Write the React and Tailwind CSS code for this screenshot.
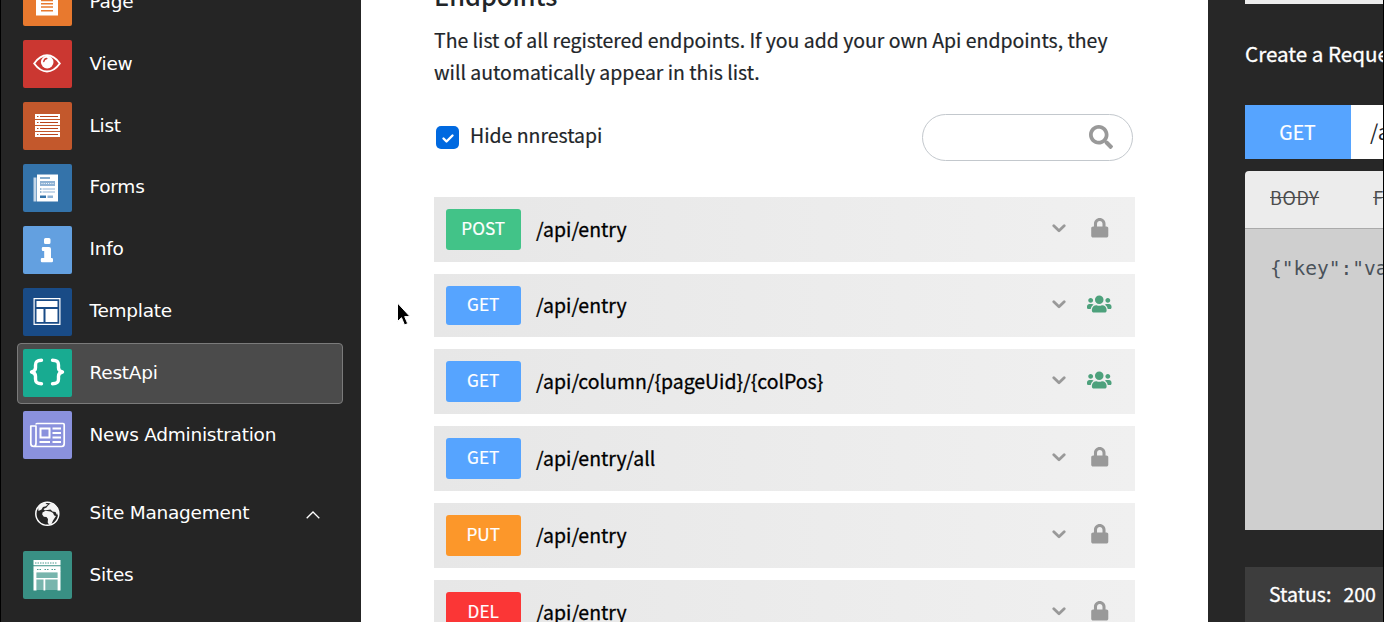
import React from 'react';
import { FaLock, FaUsers, FaSearch } from 'react-icons/fa';

const svgProps = { viewBox: '0 0 48 48', className: 'w-12 h-12 block' };

const icons = {
  page: (
    <svg {...svgProps}>
      <path fill="#fff" d="M13 8h18.500l3.500 4v25.500H13z" />
      <path stroke="#e8792e" strokeWidth="1.500" d="M18 22.500h12M18 25.800h12M18 29.100h12M18 32.700h12" />
    </svg>
  ),
  view: (
    <svg {...svgProps}>
      <path fill="none" stroke="#fff" strokeWidth="1.900" d="M11.200 23.500Q17 15.300 24 15.300T36.800 23.500Q31 31.500 24 31.500T11.200 23.500Z" />
      <circle cx="24.200" cy="22.100" r="6.300" fill="#fff" />
      <path fill="none" stroke="#cb3731" strokeWidth="1.400" strokeLinecap="round" d="M20.800 21.500Q21.200 18.800 23.800 18.500" />
    </svg>
  ),
  list: (
    <svg {...svgProps}>
      <path fill="#fff" d="M12 12h25v5H12zM12 18h25v5H12zM12 24h25v5H12zM12 30h25v5H12z" />
      <path stroke="#b8431c" strokeWidth="1.2" d="M14 14.5h1.500M17 14.5h18M14 20.5h1.500M17 20.5h18M14 26.5h1.500M17 26.5h18M14 32.5h1.500M17 32.5h18" />
    </svg>
  ),
  forms: (
    <svg {...svgProps}>
      <path fill="#c3d6e8" d="M10.500 13.500h3V37.500h-3z" />
      <path fill="#fff" d="M14 10.500h21v27H14z" />
      <path fill="#8fb2d4" d="M17 17h15v5H17z" />
      <path stroke="#3473aa" strokeWidth="1.2" d="M17 14h10" />
      <path stroke="#fff" strokeWidth="1" strokeDasharray="1 1.200" d="M18.500 19.500h12" />
      <path stroke="#3473aa" strokeWidth="1.200" d="M17 25h1.500M17 28h1.500" />
      <path stroke="#8fb2d4" strokeWidth="1.2" d="M19.500 25h12.500M19.500 28h12.500" />
      <path fill="#3473aa" d="M17 31.500h6v2.500h-6z" />
      <path fill="#8fb2d4" d="M24.500 31.500h5.500v2.500h-5.500z" />
    </svg>
  ),
  info: (
    <svg {...svgProps}>
      <path fill="#fff" d="M22.500 12h3.500a1.500 1.500 0 0 1 1.500 1.500v3a1.500 1.500 0 0 1-1.500 1.500h-3.500a1.500 1.500 0 0 1-1.500-1.500v-3a1.500 1.500 0 0 1 1.500-1.500zM20 21h6a2 2 0 0 1 2 2v9h.8a1.200 1.200 0 0 1 1.200 1.200V35a1.200 1.200 0 0 1-1.200 1.200H19A1.200 1.200 0 0 1 17.800 35v-1.800A1.200 1.200 0 0 1 19 32h2.200v-7H20a1.200 1.200 0 0 1-1.200-1.200v-1.600A1.200 1.200 0 0 1 20 21z" />
    </svg>
  ),
  template: (
    <svg {...svgProps}>
      <path fill="none" stroke="#fff" strokeWidth="1.2" d="M11.100 10.600h25.800v25.800H11.100z" />
      <path fill="#fff" d="M13.500 13h21v6h-21zM13.500 21h7v13h-7zM22.500 21h12v13h-12z" />
    </svg>
  ),
  rest: (
    <svg {...svgProps}>
      <path fill="none" stroke="#fff" strokeWidth="3.400" strokeLinecap="round" strokeLinejoin="round" d="M18.500 11.300c-4.500 0-6 1.500-6 4.700v2.800c0 2.500-1.500 3.700-4 4.200 2.500.5 4 1.700 4 4.200v2.800c0 3.200 1.500 4.700 6 4.700M29.500 11.300c4.500 0 6 1.500 6 4.700v2.800c0 2.500 1.500 3.700 4 4.200-2.500.5-4 1.700-4 4.200v2.800c0 3.200-1.500 4.700-6 4.700" />
    </svg>
  ),
  news: (
    <svg {...svgProps}>
      <path fill="none" stroke="#fff" strokeWidth="1.700" strokeLinejoin="round" d="M13 13.500q0-1 1-1h26q1.200 0 1.200 1.200v18.800q0 3-2.500 3H11q-3.200 0-3.200-3V15H13V32q0 3.500-2.500 3.500" />
      <path fill="none" stroke="#fff" strokeWidth="2" d="M17.500 17.500h9v9h-9z" />
      <path stroke="#fff" strokeWidth="1.800" d="M29.500 17.500H38M29.500 22H38M29.500 26.500H38M16.500 31h10.500M29.500 31H38" />
    </svg>
  ),
  sites: (
    <svg {...svgProps}>
      <path fill="#fff" d="M10.500 9h27v5.300h-27zM10.500 15.300h27v5h-27z" />
      <path stroke="#399084" strokeWidth=".9" strokeDasharray="1.500 1" d="M12 12h22M14 18.500h5M21.500 18.500h5M28.500 18.500h4" />
      <path fill="#78b5ad" d="M13.500 21.500h21v17.500h-21z" />
      <path fill="#fff" d="M10.500 20h3v19.500h-3zM34.500 20h3v19.500h-3zM13 20h22v1.500H13zM13 27h22v1.500H13zM20.500 28h1.800v11.500h-1.800z" />
    </svg>
  ),
};

const modules = [
  { label: 'Page', icon: 'page', color: 'bg-[#e8792e]' },
  { label: 'View', icon: 'view', color: 'bg-[#cb3731]' },
  { label: 'List', icon: 'list', color: 'bg-[#c3582c]' },
  { label: 'Forms', icon: 'forms', color: 'bg-[#3473aa]' },
  { label: 'Info', icon: 'info', color: 'bg-[#63a0e0]' },
  { label: 'Template', icon: 'template', color: 'bg-[#194b86]' },
  { label: 'RestApi', icon: 'rest', color: 'bg-[#18ab91]', active: true },
  { label: 'News Administration', icon: 'news', color: 'bg-[#8a91dd]' },
];

function Module({ label, icon, color, active }) {
  return (
    <li className="h-[61.850px] shrink-0">
      <div
        className={
          'h-[60.500px] flex items-center gap-[18px] pl-[5px] rounded-[4px] border ' +
          (active ? 'bg-[#4b4b4b] border-[#7b7b7b]' : 'border-transparent')
        }
      >
        <span className={'w-[48.500px] h-[48px] shrink-0 rounded-[2px] ' + color}>{icons[icon]}</span>
        <span className="pb-px">{label}</span>
      </div>
    </li>
  );
}

function Sidebar() {
  return (
    <nav className="w-[361px] shrink-0 bg-[#252525] border-l border-black pl-[16px] pr-[18px] overflow-hidden text-white text-[18.500px] leading-6 tracking-[-0.240px] font-['DejaVu_Sans',sans-serif]">
      <ul className="flex flex-col -mt-[27.900px]">
        {modules.map((m) => (
          <Module key={m.label} {...m} />
        ))}
        <li className="h-[78px] shrink-0 flex items-center pt-[16px] pl-[6px] pr-[23.500px]">
          <svg viewBox="0 0 48 48" className="w-12 h-12 shrink-0">
            <circle cx="24.300" cy="23.800" r="11.500" fill="none" stroke="#fff" strokeWidth="1.500" />
            <path
              fill="#f4f4f4"
              d="M15 16.500Q18 12.500 24 12l-1.500 2 2.500.3-2 2-3 .7-1.500 2.500-3 1.500zM20.500 19l3-1.500 1.500-2 3-2.500 3 .8Q35 17 35.500 21.500l-1.200 4-1.800-3.500-3-.5-2-2-3 .5-3 .3zM19.500 22.500l3-1.800 5 .8 2.500 1.500 1.200 2.500 1.800.5-3 4.500-1.500 3.500-2.300 1-1.500-2.500.3-3.500-1.500-2-2.700-.3-1.600-2.200z"
            />
          </svg>
          <span className="ml-[18.500px] pb-px">Site Management</span>
          <svg viewBox="0 0 14 8" className="ml-auto w-[14px] h-[8px] mt-0.5" fill="none" stroke="#fff" strokeWidth="1.300">
            <path d="M.7 7.300L7 1l6.300 6.300" />
          </svg>
        </li>
        <Module label="Sites" icon="sites" color="bg-[#399084]" />
      </ul>
    </nav>
  );
}

const endpoints = [
  { method: 'POST', path: '/api/entry', color: 'bg-[#42c388]', lock: true },
  { method: 'GET', path: '/api/entry', color: 'bg-[#56a4ff]', h: 'h-[63px]' },
  { method: 'GET', path: '/api/column/{pageUid}/{colPos}', color: 'bg-[#56a4ff]' },
  { method: 'GET', path: '/api/entry/all', color: 'bg-[#56a4ff]', lock: true },
  { method: 'PUT', path: '/api/entry', color: 'bg-[#fc972a]', lock: true },
  { method: 'DEL', path: '/api/entry', color: 'bg-[#fb3636]', lock: true },
];

function Endpoint({ method, path, color, lock, h }) {
  return (
    <li className={'shrink-0 flex items-stretch py-3 pl-[11.500px] pr-[21.500px] bg-gradient-to-r from-[#e7e7e7] to-[#f0f0f0] ' + (h || 'h-[65px]')}>
      <span className={'w-[75.500px] rounded-[3px] flex items-center justify-center text-white text-[17.200px] leading-none pb-[3px] [-webkit-text-stroke:0.2px] ' + color}>
        {method}
      </span>
      <span className="ml-[15px] self-center text-black text-[19.450px] leading-6 pb-[2px] [-webkit-text-stroke:0.3px]">{path}</span>
      <svg viewBox="0 0 14 9" className="ml-auto self-center w-[14px] h-[9px] mb-[2px]" fill="none" stroke="#999" strokeWidth="2.800" strokeLinecap="round" strokeLinejoin="round">
        <path d="M1.800 1.800L7 6.800l5.200-5" />
      </svg>
      <span className="ml-[20px] w-[28px] self-center flex justify-center mb-[3px]">
        {lock ? <FaLock className="w-[19.500px] h-[19.500px] text-[#999]" /> : <FaUsers className="w-[24.500px] h-[20px] text-[#4da17c]" />}
      </span>
    </li>
  );
}

function Endpoints() {
  return (
    <main className="w-[847px] shrink-0 bg-white pl-[73px] pr-[73px] overflow-hidden flex flex-col text-[#212529]">
      <h2 className="-mt-[25px] h-[41px] shrink-0 text-[25.300px] leading-[40px] font-medium">Endpoints</h2>
      <p className="mt-[8px] h-[64px] shrink-0 text-[19.450px] leading-[32px] whitespace-nowrap [-webkit-text-stroke:0.2px]">
        The list of all registered endpoints. If you add your own Api endpoints, they
        <br />
        will automatically appear in this list.
      </p>
      <div className="mt-[26px] h-[47px] shrink-0 flex items-center">
        <span className="ml-[2px] w-[23px] h-[23px] rounded-[5px] bg-[#0069e0] flex items-center justify-center">
          <svg viewBox="0 0 14 14" className="w-[14px] h-[14px]" fill="none" stroke="#fff" strokeWidth="2.400" strokeLinecap="round" strokeLinejoin="round">
            <path d="M2.500 7.500l3 3 6-6" />
          </svg>
        </span>
        <span className="ml-[11px] text-[19.450px] leading-6 pb-[5px] [-webkit-text-stroke:0.2px]">Hide nnrestapi</span>
        <span className="ml-auto mr-[2px] w-[211px] h-[47px] rounded-full border border-[#c3c8cd] flex items-center justify-end pr-[19px] pb-[2px]">
          <FaSearch className="w-[24px] h-[24px] text-[#999]" />
        </span>
      </div>
      <ul className="mt-[36px] flex flex-col gap-3">
        {endpoints.map((e, i) => (
          <Endpoint key={i} {...e} />
        ))}
      </ul>
    </main>
  );
}

function RequestPanel() {
  return (
    <aside className="w-[176px] shrink-0 bg-[#272727] border-r border-black pl-[37px] overflow-hidden flex flex-col whitespace-nowrap">
      <div className="h-[4px] shrink-0 bg-[#ececec]" />
      <h3 className="mt-[33px] h-[32px] shrink-0 text-white text-[20.600px] leading-[32px] [-webkit-text-stroke:0.3px]">Create a Request</h3>
      <div className="mt-[36px] h-[54px] shrink-0 flex">
        <span className="w-[106px] shrink-0 bg-[#56a4ff] text-white text-[19.450px] pr-px flex items-center justify-center [-webkit-text-stroke:0.2px]">GET</span>
        <span className="w-[200px] shrink-0 bg-white pl-[19px] text-[#212529] text-[21px] flex items-center">/api/</span>
      </div>
      <div className="mt-[12px] h-[58px] w-[300px] shrink-0 bg-[#ececec] border-b border-[#aaa] rounded-tl-[4px] flex items-center gap-[54px] pl-[25px] pb-[4px] text-[18px] tracking-[0.600px] text-[#4d4d4d]">
        <span className="line-through">BODY</span>
        <span className="line-through">FILES</span>
      </div>
      <div className="h-[301px] w-[300px] shrink-0 bg-[#cfcfcf] pl-[25px] pt-[28px] text-[19.500px] leading-6 text-[#4a525a] font-['DejaVu_Sans_Mono',monospace]">
        {'{"key":"value"}'}
      </div>
      <div className="mt-[37px] h-[60px] w-[300px] shrink-0 bg-[#3d3d3d] text-white text-[19.500px] flex items-center gap-[12px] pl-[24px] pb-[7px] [-webkit-text-stroke:0.3px]">
        <span>Status:</span>
        <span>200</span>
      </div>
    </aside>
  );
}

export default function App() {
  return (
    <div className="relative w-[1384px] h-[622px] overflow-hidden flex bg-[#272727] font-['Noto_Sans_CJK_SC',sans-serif]">
      <Sidebar />
      <Endpoints />
      <RequestPanel />
      <svg viewBox="0 0 16 24" className="absolute left-[396px] top-[302px] w-[16px] h-[24px]">
        <path fill="#000" stroke="#fff" strokeWidth="1" d="M1.500 1v18.500l4-3.800 3 7.300 3.200-1.400-3-7h5.300z" />
      </svg>
    </div>
  );
}
